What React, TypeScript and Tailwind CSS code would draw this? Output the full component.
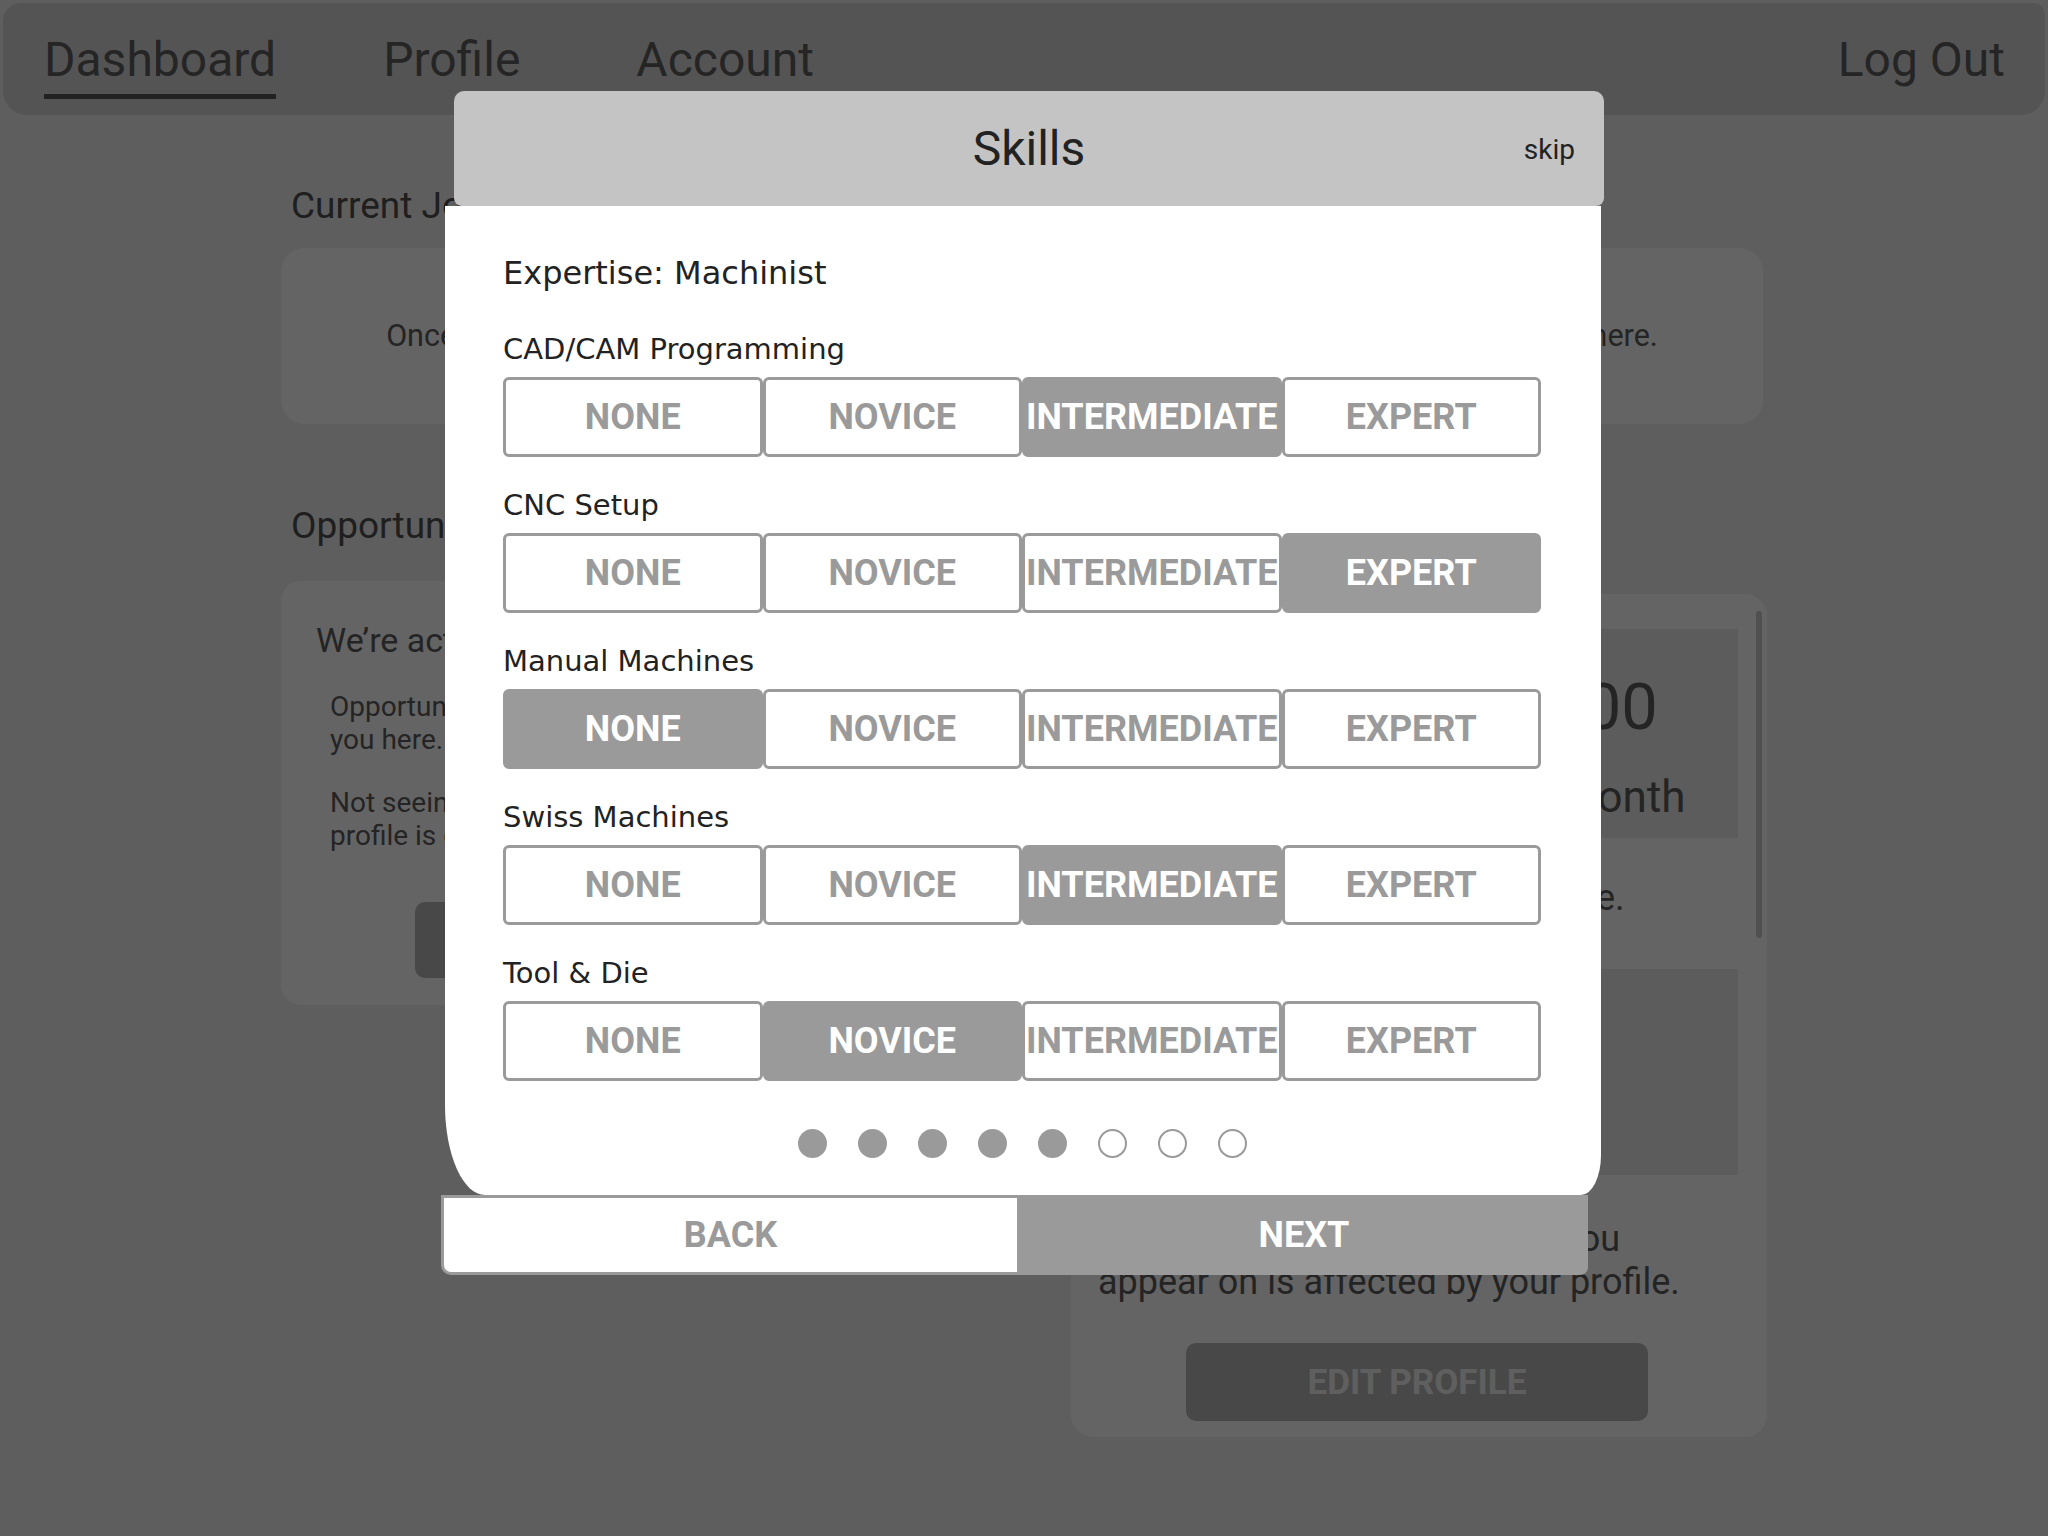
import React from 'react';

const LEVELS = ['NONE', 'NOVICE', 'INTERMEDIATE', 'EXPERT'];

const skills = [
  { name: 'CAD/CAM Programming', level: 2 },
  { name: 'CNC Setup', level: 3 },
  { name: 'Manual Machines', level: 0 },
  { name: 'Swiss Machines', level: 2 },
  { name: 'Tool & Die', level: 1 },
];

function LevelPicker({ value }: { value: number }) {
  return (
    <div className="mt-[13px] flex h-[80px]">
      {LEVELS.map((level, i) => (
        <div
          key={level}
          className={`flex flex-1 items-center justify-center whitespace-nowrap rounded-[6px] border-[3px] border-[#9a9a9a] text-[36px] font-bold leading-none ${
            i === value ? 'bg-[#9a9a9a] text-white' : 'bg-white text-[#9a9a9a]'
          }`}
        >
          {level}
        </div>
      ))}
    </div>
  );
}

function NavBar() {
  return (
    <div className="px-[3px] pt-[3px]">
      <nav className="flex h-[112px] items-start rounded-b-[24px] rounded-tl-[18px] rounded-tr-[12px] bg-[#d2d2d2] pl-[41px] pr-[40px] pt-[33px] text-[48px] leading-none text-[#5d5d5d]">
        <div className="flex flex-col">
          <span>Dashboard</span>
          <span className="mt-[10px] h-[5px] bg-[#555]" />
        </div>
        <span className="ml-[107px]">Profile</span>
        <span className="ml-[116px]">Account</span>
        <span className="ml-auto">Log Out</span>
      </nav>
    </div>
  );
}

function Dashboard() {
  return (
    <main className="ml-[281px] w-[1486px] text-[#5a5a5a]">
      <h2 className="ml-[10px] mt-[72px] text-[37px] leading-none text-[#4e4e4e]">Current Jobs</h2>
      <section className="mt-[24px] flex h-[176px] w-[1482px] items-center justify-center rounded-[24px] bg-[#fafafa] text-[30.5px] whitespace-nowrap">
        Once you’ve been hired for a job, its details, location and your schedule will show up right here.
      </section>

      <h2 className="ml-[10px] mt-[83px] text-[37px] leading-none text-[#4e4e4e]">Opportunities</h2>
      <div className="mt-[37px] flex items-start">
        <section className="h-[424px] w-[760px] rounded-[20px] bg-[#fafafa] pl-[35px] pt-[42px] whitespace-nowrap">
          <p className="text-[34px] leading-none">We’re actively searching for you.</p>
          <p className="ml-[14px] mt-[33px] text-[28px] leading-[33px]">
            Opportunities that match your skills will be shown to
            <br />
            you here.
          </p>
          <p className="ml-[14px] mt-[30px] text-[28px] leading-[33px]">
            Not seeing any opportunities? Make sure your
            <br />
            profile is complete.
          </p>
          <div className="ml-[99px] mt-[50px] flex h-[76px] w-[492px] items-center justify-center rounded-[10px] bg-[#b4b4b4] text-[35px] font-bold text-[#eee]">
            BROWSE
          </div>
        </section>

        <section className="relative ml-[30px] mt-[13px] h-[843px] w-[696px] rounded-[22px] bg-[#fafafa] pt-[35px] whitespace-nowrap">
          <div className="mx-[29px] flex h-[209px] flex-col items-center bg-[#e6e6e6] pt-[46px]">
            <span className="text-[65px] leading-none">$8,000 - $10,000</span>
            <span className="mt-[35px] text-[44px] leading-none">Estimated Wage Per Month</span>
          </div>
          <p className="ml-[62px] mt-[39px] text-[36px] leading-[43px]">Your matches will appear here.</p>
          <div className="mx-[29px] mt-[49px] h-[206px] bg-[#e6e6e6]" />
          <p className="ml-[27px] mt-[43px] text-[36px] leading-[43px]">
            The number of opportunities you
            <br />
            appear on is affected by your profile.
          </p>
          <div className="ml-[115px] mt-[39px] flex h-[78px] w-[462px] items-center justify-center rounded-[10px] bg-[#b4b4b4] text-[35px] font-bold leading-none text-[#eee]">
            EDIT PROFILE
          </div>
          <div className="absolute right-[5px] top-[17px] h-[327px] w-[6px] rounded-full bg-[#c8c8c8]" />
        </section>
      </div>
    </main>
  );
}

function SkillsModal() {
  return (
    <div className="absolute left-[441px] top-[91px] w-[1163px] text-[#222]">
      <header className="ml-[13px] grid h-[115px] w-[1150px] grid-cols-[1fr_auto_1fr] items-center rounded-b-[8px] rounded-t-[10px] bg-[#c4c4c4]">
        <span />
        <h1 className="text-[48px] leading-none">Skills</h1>
        <button className="justify-self-end pr-[29px] pt-[2px] text-[28px] leading-none text-[#222]">skip</button>
      </header>

      <div className="ml-[4px] w-[1156px] rounded-bl-[40px_90px] rounded-br-[20px_40px] bg-white pb-[37px] pl-[58px] pr-[60px] pt-[51px] [font-family:'DejaVu_Sans',Roboto,sans-serif]">
        <p className="text-[32px] leading-none">Expertise: Machinist</p>
        <div className="mt-[46px] flex flex-col gap-[34px]">
          {skills.map((skill) => (
            <div key={skill.name}>
              <p className="text-[29px] leading-none">{skill.name}</p>
              <div className="[font-family:Roboto,sans-serif]">
                <LevelPicker value={skill.level} />
              </div>
            </div>
          ))}
        </div>
        <div className="mt-[48px] flex justify-center gap-[31px]">
          {Array.from({ length: 8 }).map((_, i) => (
            <span
              key={i}
              className={`h-[29px] w-[29px] rounded-full ${i < 5 ? 'bg-[#9a9a9a]' : 'border-2 border-[#9a9a9a] bg-white'}`}
            />
          ))}
        </div>
      </div>

      <div className="flex">
        <button className="h-[80px] w-[579px] rounded-bl-[10px] border-[3px] border-[#9a9a9a] bg-white text-[36px] font-bold leading-none text-[#9a9a9a]">
          BACK
        </button>
        <button className="h-[80px] w-[568px] rounded-br-[8px] bg-[#9a9a9a] text-[36px] font-bold leading-none text-white">
          NEXT
        </button>
      </div>
    </div>
  );
}

export default function App() {
  return (
    <div className="relative h-[1536px] w-[2048px] overflow-hidden bg-[#ebebeb] [font-family:Roboto,sans-serif]">
      <NavBar />
      <Dashboard />
      {/* dim overlay */}
      <div className="absolute inset-0 bg-[rgba(0,0,0,0.6)]" />
      <SkillsModal />
    </div>
  );
}
